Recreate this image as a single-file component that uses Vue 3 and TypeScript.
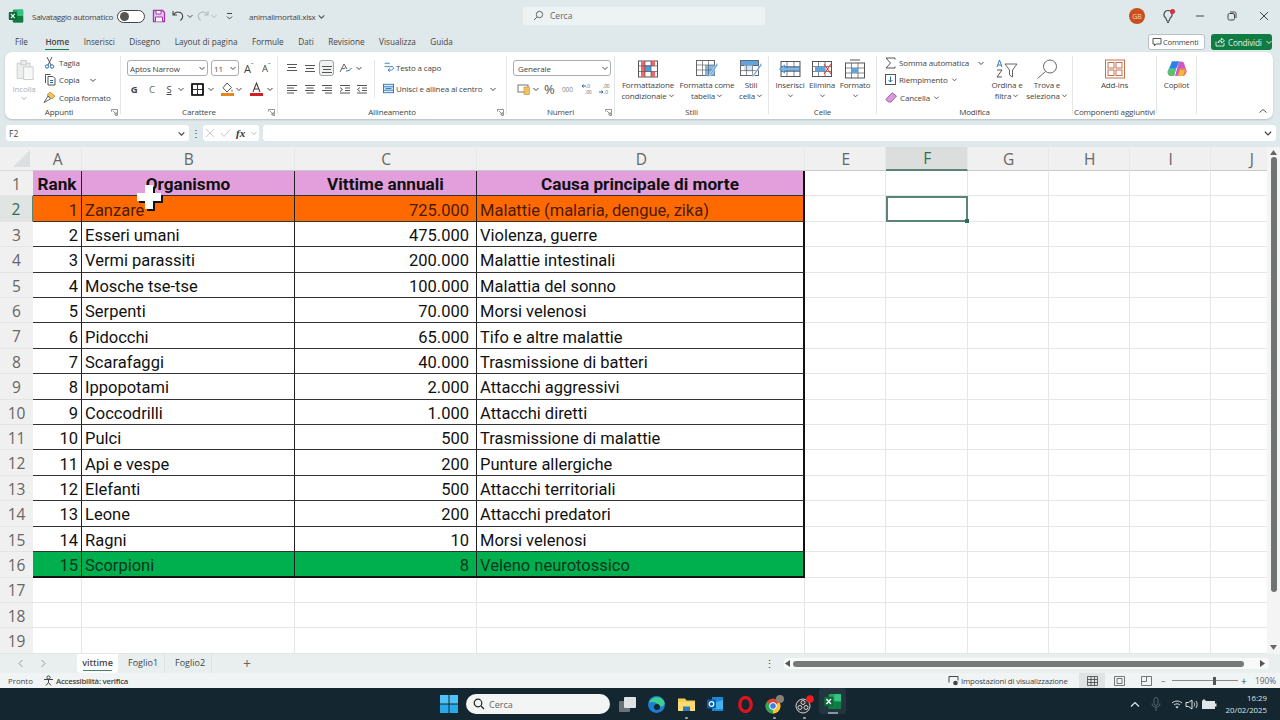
<script setup lang="ts">
type Row = [string, string, string, string];

const columns = ["A", "B", "C", "D", "E", "F", "G", "H", "I", "J"];
const tabs = ["File", "Home", "Inserisci", "Disegno", "Layout di pagina", "Formule", "Dati", "Revisione", "Visualizza", "Guida"];

const table: Row[] = [
  ["Rank", "Organismo", "Vittime annuali", "Causa principale di morte"],
  ["1", "Zanzare", "725.000", "Malattie (malaria, dengue, zika)"],
  ["2", "Esseri umani", "475.000", "Violenza, guerre"],
  ["3", "Vermi parassiti", "200.000", "Malattie intestinali"],
  ["4", "Mosche tse-tse", "100.000", "Malattia del sonno"],
  ["5", "Serpenti", "70.000", "Morsi velenosi"],
  ["6", "Pidocchi", "65.000", "Tifo e altre malattie"],
  ["7", "Scarafaggi", "40.000", "Trasmissione di batteri"],
  ["8", "Ippopotami", "2.000", "Attacchi aggressivi"],
  ["9", "Coccodrilli", "1.000", "Attacchi diretti"],
  ["10", "Pulci", "500", "Trasmissione di malattie"],
  ["11", "Api e vespe", "200", "Punture allergiche"],
  ["12", "Elefanti", "500", "Attacchi territoriali"],
  ["13", "Leone", "200", "Attacchi predatori"],
  ["14", "Ragni", "10", "Morsi velenosi"],
  ["15", "Scorpioni", "8", "Veleno neurotossico"],
];

const rowNumbers = Array.from({ length: 19 }, (_, i) => i + 1);

const cellText = (row: number, col: number) => table[row - 1]?.[col] ?? "";

const cellClass = (row: number, col: number) => {
  const inTable = col < 4 && row <= 16;
  return {
    cell: true,
    boxed: inTable,
    first: inTable && col === 0,
    last: inTable && col === 3,
    head: inTable && row === 1,
    orange: inTable && row === 2,
    green: inTable && row === 16,
    bottom: inTable && row === 16,
    num: inTable && row > 1 && (col === 0 || col === 2),
    selected: row === 2 && col === 5,
  };
};
</script>

<template>
  <div class="app">
    <svg class="defs" aria-hidden="true">
      <symbol id="chev" viewBox="0 0 8 8"><path d="M1.5 3 4 5.5 6.5 3" fill="none" stroke="currentColor" stroke-width="1" /></symbol>
      <symbol id="excel" viewBox="0 0 20 20">
        <rect x="6" y="2" width="13" height="16" rx="1.5" fill="#21a366" />
        <rect x="12" y="2" width="7" height="8" rx="1" fill="#33c481" />
        <rect x="6" y="10" width="13" height="8" rx="1" fill="#107c41" />
        <rect x="1" y="5" width="10" height="10" rx="1.2" fill="#0b6a37" />
        <path d="m3.6 7.3 4.8 5.4m0-5.4-4.8 5.4" stroke="#fff" stroke-width="1.4" />
      </symbol>
      <symbol id="launch" viewBox="0 0 8 8"><path d="M.5 3V.5H7.5V7.5H5M2 2 6 6M6 3.5V6H3.5" fill="none" stroke="#666" stroke-width=".8" /></symbol>
    </svg>

    <header class="titlebar">
      <svg class="t-excel" width="16" height="16"><use href="#excel" /></svg>
      <span class="t-auto">Salvataggio automatico</span>
      <span class="toggle"><i /></span>
      <svg class="t-save" width="14" height="14" viewBox="0 0 14 14">
        <path d="M1.5 1.5h9l2 2v9h-11z" fill="#e9c8ee" stroke="#a336ad" stroke-width="1.3" />
        <path d="M4 1.5h5v3.5H4zM3.5 12.5V8h7v4.5" fill="#fff" stroke="#a336ad" stroke-width="1" />
      </svg>
      <svg class="t-undo" width="14" height="14" viewBox="0 0 14 14"><path d="M2 2v4h4M2.3 6C4 3.3 7 2.5 9.3 3.6c3.300 1.600 3.200 5.800 0 8" fill="none" stroke="#444" stroke-width="1.1" /></svg>
      <svg class="mini g1" width="8" height="8"><use href="#chev" /></svg>
      <svg class="t-redo" width="14" height="14" viewBox="0 0 14 14"><path d="M12 2v4H8M11.700 6C10 3.300 7 2.500 4.700 3.600c-3.300 1.600-3.200 5.800 0 8" fill="none" stroke="#b4bbbd" stroke-width="1.1" /></svg>
      <svg class="mini g2 dim" width="8" height="8"><use href="#chev" /></svg>
      <svg class="t-qat" width="9" height="9" viewBox="0 0 9 9"><path d="M2 1.500h5M2 4.500l2.500 2.500L7 4.500" fill="none" stroke="#444" /></svg>
      <span class="t-file">animalimortali.xlsx</span>
      <svg class="mini g3" width="9" height="9"><use href="#chev" /></svg>
      <div class="t-search">
        <svg width="11" height="11" viewBox="0 0 11 11"><circle cx="6.500" cy="4.500" r="3.200" fill="none" stroke="#666" /><path d="M4.200 6.800 1 10" stroke="#666" /></svg>
        <span>Cerca</span>
      </div>
      <span class="avatar">GB</span>
      <span class="bulb">
        <svg width="14" height="16" viewBox="0 0 14 16"><path d="M7 2.500a4 4 0 0 1 2.300 7.300L8 13H6L4.700 9.800A4 4 0 0 1 7 2.500z" fill="none" stroke="#444" stroke-width="1.100" /><path d="M6 14.500h2" stroke="#444" /></svg>
        <i />
      </span>
      <svg class="w-min" width="10" height="10" viewBox="0 0 10 10"><path d="M1 5h8" stroke="#444" /></svg>
      <svg class="w-max" width="10" height="10" viewBox="0 0 10 10"><rect x="1" y="2.500" width="6.500" height="6.500" rx="1.500" fill="none" stroke="#444" /><path d="M3 1h4.500A1.500 1.500 0 0 1 9 2.500V7" fill="none" stroke="#444" /></svg>
      <svg class="w-close" width="10" height="10" viewBox="0 0 10 10"><path d="m1 1 8 8m0-8-8 8" stroke="#444" /></svg>
    </header>

    <nav class="tabsbar">
      <span v-for="tab in tabs" :key="tab" class="tab" :class="{ active: tab === 'Home' }">{{ tab }}</span>
      <div class="tab-actions">
        <button class="comments">
          <svg width="10" height="10" viewBox="0 0 10 10"><path d="M1 1.500h8v5.500H4L2.500 8.800V7H1z" fill="none" stroke="#444" stroke-width=".9" /></svg>
          Commenti
        </button>
        <button class="share">
          <svg width="10" height="10" viewBox="0 0 10 10"><path d="M1 4.500V9h8V6M3 6c.3-2 1.600-3 3.500-3V1.200L9.500 3.800 6.500 6V4.500C5 4.500 4 5 3 6z" fill="none" stroke="#fff" stroke-width=".8" /></svg>
          Condividi
          <svg width="8" height="8"><use href="#chev" /></svg>
        </button>
      </div>
    </nav>

    <section class="ribbon">
      <div class="group g-appunti">
        <div class="body">
          <div class="paste">
            <svg width="19" height="21" viewBox="0 0 22 24"><path d="M2.500 4.500h15v18h-15z" fill="#eceeee" stroke="#c5c9c9" /><rect x="7" y="1.500" width="6" height="5" fill="#eceeee" stroke="#c5c9c9" /><rect x="10" y="9" width="11" height="14.500" fill="#f7f8f8" stroke="#c5c9c9" /></svg>
            <span>Incolla</span>
            <svg width="8" height="8"><use href="#chev" /></svg>
          </div>
          <div class="stack">
            <div class="small">
              <svg width="13" height="13" viewBox="0 0 13 13"><path d="M4 1l4 8M9 1 5 9" stroke="#555" fill="none" /><circle cx="4" cy="10.500" r="1.700" fill="none" stroke="#1f6db5" /><circle cx="9" cy="10.500" r="1.700" fill="none" stroke="#1f6db5" /></svg>
              Taglia
            </div>
            <div class="small">
              <svg width="13" height="13" viewBox="0 0 13 13"><path d="M2.500 10V1.500h5" fill="none" stroke="#555" /><path d="M5 3.500h5l2 2v6.500H5z" fill="#fff" stroke="#555" /><path d="M7 7.500h3M7 9.500h3" stroke="#1f6db5" /></svg>
              Copia
              <svg class="push-copy" width="8" height="8"><use href="#chev" /></svg>
            </div>
            <div class="small">
              <svg width="13" height="13" viewBox="0 0 13 13"><path d="m7 1 5 4-3 3-5-4z" fill="#f3c35b" stroke="#b0822a" stroke-width=".7" /><path d="M5 5 1 11.500 7.500 8z" fill="#fff" stroke="#555" stroke-width=".9" /></svg>
              Copia formato
            </div>
          </div>
        </div>
        <div class="lbl lbl-appunti">Appunti</div>
        <svg class="launcher" width="7" height="7"><use href="#launch" /></svg>
      </div>

      <div class="group g-font">
        <div class="body col">
          <div class="line">
            <div class="select s-font">Aptos Narrow<svg width="8" height="8"><use href="#chev" /></svg></div>
            <div class="select s-size">11<svg width="8" height="8"><use href="#chev" /></svg></div>
            <span class="grow-a">A<sup>ˆ</sup></span>
            <span class="shrink-a">A<sup>ˇ</sup></span>
          </div>
          <div class="line l2 font-tools">
            <b class="fi i-g">G</b>
            <span class="fi i-c">C</span>
            <span class="fi i-s">S</span>
            <svg class="i-c1" width="8" height="8"><use href="#chev" /></svg>
            <svg class="i-b" width="13" height="13" viewBox="0 0 13 13"><path d="M1 1h11v11H1zM6.500 1v11M1 6.500h11" fill="none" stroke="#333" stroke-width="1" /><path d="M1 1h11v11H1z" fill="none" stroke="#111" stroke-width="1.700" /></svg>
            <svg class="i-c2" width="8" height="8"><use href="#chev" /></svg>
            <svg class="i-fill" width="13" height="14" viewBox="0 0 13 14"><path d="m6 1 4.500 4.500L6 10 2 5.800z" fill="#fff" stroke="#555" /><path d="M11 7.500c.8 1 .8 2.300 0 2.300s-.8-1.300 0-2.300z" fill="#555" /><rect y="11" width="13" height="3" fill="#e8851f" /></svg>
            <svg class="i-c3" width="8" height="8"><use href="#chev" /></svg>
            <svg class="i-color" width="13" height="14" viewBox="0 0 13 14"><path d="m3 10 3.500-9 3.500 9M4.300 7h4.400" fill="none" stroke="#444" stroke-width="1.100" /><rect y="11" width="13" height="3" fill="#d21f26" /></svg>
            <svg class="i-c4" width="8" height="8"><use href="#chev" /></svg>
          </div>
        </div>
        <div class="lbl">Carattere</div>
        <svg class="launcher" width="7" height="7"><use href="#launch" /></svg>
      </div>

      <div class="group g-align">
        <div class="body">
          <div class="align-icons">
            <svg width="12" height="9" viewBox="0 0 12 9"><path d="M1 .5h10M2 3.500h8M1 6.500h10" stroke="#555" /></svg>
            <svg width="12" height="9" viewBox="0 0 12 9"><path d="M1 1.500h10M2 4.500h8M1 7.500h10" stroke="#555" /></svg>
            <span class="align-on"><svg width="12" height="9" viewBox="0 0 12 9"><path d="M1 2.500h10M2 5.500h8M1 8.500h10" stroke="#555" /></svg></span>
            <span class="orient"><svg width="14" height="11" viewBox="0 0 14 11"><path d="m1 9 4-8 3 5M2.500 6l4-1" fill="none" stroke="#666" /><path d="M7 8c2.500 0 4-1 5.500-3" fill="none" stroke="#1f6db5" /></svg><svg width="8" height="8"><use href="#chev" /></svg></span>
            <svg width="12" height="9" viewBox="0 0 12 9"><path d="M1 .5h10M1 3h7M1 5.500h10M1 8h7" stroke="#555" /></svg>
            <svg width="12" height="9" viewBox="0 0 12 9"><path d="M1 .5h10M2.500 3h7M1 5.500h10M2.500 8h7" stroke="#555" /></svg>
            <svg width="12" height="9" viewBox="0 0 12 9"><path d="M1 .5h10M4 3h7M1 5.500h10M4 8h7" stroke="#555" /></svg>
            <svg width="12" height="9" viewBox="0 0 12 9"><path d="M1 .5h10M6 3h5M6 5.500h5M1 8h10M1 2.500l2.500 2-2.500 2" fill="none" stroke="#555" /></svg>
            <svg width="12" height="9" viewBox="0 0 12 9"><path d="M1 .5h10M6 3h5M6 5.500h5M1 8h10M4 2.500l-2.500 2 2.500 2" fill="none" stroke="#555" /></svg>
          </div>
          <div class="stack wrap-stack">
            <div class="small">
              <svg width="11" height="11" viewBox="0 0 13 13"><path d="M2 1.500h6M2 5.500h9c1.800 0 1.800 4-1 4H6m2-2-2 2 2 2" fill="none" stroke="#1f6db5" /></svg>
              Testo a capo
            </div>
            <div class="small merge">
              <svg width="11" height="11" viewBox="0 0 13 13"><rect x=".5" y="1.500" width="12" height="10" fill="#d9ecfa" stroke="#1f6db5" /><path d="M.5 4.500h12M.5 8.500h12M3 6.500h7" stroke="#1f6db5" /></svg>
              Unisci e allinea al centro
              <svg class="push-merge" width="8" height="8"><use href="#chev" /></svg>
            </div>
          </div>
        </div>
        <div class="lbl">Allineamento</div>
        <svg class="launcher" width="7" height="7"><use href="#launch" /></svg>
      </div>

      <div class="group g-num">
        <div class="body col">
          <div class="line"><div class="select s-num">Generale<svg width="8" height="8"><use href="#chev" /></svg></div></div>
          <div class="line l2 num-tools">
            <svg width="13" height="12" viewBox="0 0 13 12"><rect x="1" y="2" width="10" height="7" fill="none" stroke="#777" /><rect x="7" y="4" width="5.500" height="7.500" fill="#f2c063" stroke="#b0822a" stroke-width=".5" /></svg>
            <svg class="nc" width="8" height="8"><use href="#chev" /></svg>
            <span class="pct">%</span>
            <span class="thou">000</span>
            <svg class="inc" width="14" height="12" viewBox="0 0 14 12"><path d="M5 3H1m1.500-1.500L1 3l1.500 1.500" fill="none" stroke="#1f6db5" /><text x="5" y="5" font-size="5" fill="#666">,0</text><text x="4" y="11" font-size="5" fill="#666">,00</text></svg>
            <svg class="dec" width="14" height="12" viewBox="0 0 14 12"><path d="M1 9h4m-1.500-1.500L5 9l-1.500 1.500" fill="none" stroke="#1f6db5" /><text x="5" y="5" font-size="5" fill="#666">,00</text><text x="6" y="11" font-size="5" fill="#666">,0</text></svg>
          </div>
        </div>
        <div class="lbl">Numeri</div>
        <svg class="launcher" width="7" height="7"><use href="#launch" /></svg>
      </div>

      <div class="group g-stili">
        <div class="body bigs">
          <div class="big b-cond">
            <svg width="20" height="17" viewBox="0 0 20 17"><rect x=".5" y=".5" width="19" height="16" fill="#fff" stroke="#555" /><path d="M3 .5h4v16H3zM7 5h6v6H7z" fill="#f0656c" /><path d="M13 .5h4v5h-4zM13 11h4v5.500h-4z" fill="#f0656c" /><path d="M7 5h6v6H7z" fill="#4a9fe0" /><path d="M.5 5.500h19M.5 11h19M7 .5v16M13 .5v16" stroke="#555" stroke-width=".7" /></svg>
            <span>Formattazione</span>
            <span>condizionale <svg width="7" height="7"><use href="#chev" /></svg></span>
          </div>
          <div class="big b-tab">
            <svg width="22" height="18" viewBox="0 0 22 18"><rect x=".5" y=".5" width="18" height="15" fill="#fff" stroke="#666" /><rect x="9" y="5" width="9.500" height="10.500" fill="#7db7e8" /><path d="M.5 5h18M.5 10h18M6.500.5v15M12.500.5v15" stroke="#666" stroke-width=".7" /><path d="m21 3-8 12-1.500 2.500 2.600-1.400L22 5z" fill="#5ea4de" stroke="#fff" stroke-width=".5" /></svg>
            <span>Formatta come</span>
            <span>tabella <svg width="7" height="7"><use href="#chev" /></svg></span>
          </div>
          <div class="big b-cell">
            <svg width="22" height="18" viewBox="0 0 22 18"><rect x=".5" y=".5" width="18" height="15" fill="#fff" stroke="#666" /><rect x=".5" y=".5" width="18" height="5" fill="#5ea4de" stroke="#666" /><rect x="4" y="5.500" width="9" height="6" fill="#cfe4f6" /><path d="M.5 10.500h18M6.500 5.500v10M12.500 5.500v10" stroke="#666" stroke-width=".7" /><path d="m21 3-8 12-1.500 2.500 2.600-1.400L22 5z" fill="#5ea4de" stroke="#fff" stroke-width=".5" /></svg>
            <span>Stili</span>
            <span>cella <svg width="7" height="7"><use href="#chev" /></svg></span>
          </div>
        </div>
        <div class="lbl">Stili</div>
      </div>

      <div class="group g-celle">
        <div class="body bigs">
          <div class="big b-ins">
            <svg width="22" height="16" viewBox="0 0 22 16"><rect x="2" y=".5" width="19" height="15" fill="#fff" stroke="#555" /><path d="M2 5.500h19M2 10.500h19M8 .5v15M15 .5v15" stroke="#555" stroke-width=".7" /><path d="m.5 8 5-4v2.500h15v3H5.500V12z" fill="#7db7e8" stroke="#1f6db5" stroke-width=".6" /></svg>
            <span>Inserisci</span>
            <span><svg width="7" height="7"><use href="#chev" /></svg></span>
          </div>
          <div class="big b-del">
            <svg width="20" height="16" viewBox="0 0 20 16"><rect x=".5" y=".5" width="19" height="15" fill="#fff" stroke="#555" /><path d="M.5 5.500h19M.5 10.500h19M6.500.5v15M13 .5v15" stroke="#555" stroke-width=".7" /><rect x="3" y="5.500" width="10" height="5" fill="#5ea4de" /><path d="m12 3 7 10m0-10-7 10" stroke="#d6443c" stroke-width="1.100" /></svg>
            <span>Elimina</span>
            <span><svg width="7" height="7"><use href="#chev" /></svg></span>
          </div>
          <div class="big b-fmt">
            <svg width="20" height="19" viewBox="0 0 20 19"><path d="M5 .5h10" stroke="#555" /><rect x=".5" y="3.500" width="19" height="15" fill="#fff" stroke="#555" /><path d="M.5 8.500h19M.5 13.500h19M6.500 3.500v15M13 3.500v15" stroke="#555" stroke-width=".7" /><rect x="6.500" y="8.500" width="6.500" height="5" fill="#5ea4de" /></svg>
            <span>Formato</span>
            <span><svg width="7" height="7"><use href="#chev" /></svg></span>
          </div>
        </div>
        <div class="lbl">Celle</div>
      </div>

      <div class="group g-mod">
        <div class="body">
          <div class="stack mod-stack">
            <div class="small">
              <svg width="11" height="12" viewBox="0 0 11 12"><path d="M10 2.500V1H1l4.500 5L1 11h9V9.500" fill="none" stroke="#555" /></svg>
              Somma automatica
              <svg class="push-sum" width="8" height="8"><use href="#chev" /></svg>
            </div>
            <div class="small">
              <svg width="11" height="11" viewBox="0 0 11 11"><rect x=".5" y=".5" width="10" height="10" fill="none" stroke="#555" /><path d="M5.500 2.500v5.500m-2-2 2 2 2-2" fill="none" stroke="#1f6db5" /></svg>
              Riempimento <svg width="7" height="7"><use href="#chev" /></svg>
            </div>
            <div class="small">
              <svg width="12" height="11" viewBox="0 0 12 11"><path d="M7 .8 11.500 4l-5.500 6H3.500L.8 7.500z" fill="#d99ad5" stroke="#9a3fa3" stroke-width=".8" /></svg>
              Cancella <svg width="7" height="7"><use href="#chev" /></svg>
            </div>
          </div>
          <div class="big b-sort">
            <svg width="22" height="20" viewBox="0 0 22 20"><path d="M1 8 3.500 1 6 8M1.800 6h3.400" fill="none" stroke="#1f6db5" stroke-width=".9" /><path d="M1 11h5l-5 7h5" fill="none" stroke="#444" stroke-width=".9" /><path d="M9 5h12l-4.500 6v7l-3-2v-5z" fill="none" stroke="#666" /></svg>
            <span>Ordina e</span>
            <span>filtra <svg width="7" height="7"><use href="#chev" /></svg></span>
          </div>
          <div class="big b-find">
            <svg width="22" height="20" viewBox="0 0 22 20"><circle cx="14" cy="7.500" r="6.500" fill="none" stroke="#666" /><path d="M9.500 12.500 1.500 19.500" stroke="#666" /></svg>
            <span>Trova e</span>
            <span>seleziona <svg width="7" height="7"><use href="#chev" /></svg></span>
          </div>
        </div>
        <div class="lbl">Modifica</div>
      </div>

      <div class="group g-add">
        <div class="body bigs">
          <div class="big">
            <svg width="20" height="19" viewBox="0 0 20 19"><rect x=".5" y=".5" width="19" height="18" fill="none" stroke="#c8714e" /><rect x="3" y="3" width="6" height="5.500" fill="none" stroke="#c8714e" /><rect x="11" y="3" width="6" height="5.500" fill="none" stroke="#c8714e" /><rect x="3" y="10.500" width="6" height="5.500" fill="none" stroke="#c8714e" /><rect x="11" y="10.500" width="6" height="5.500" fill="none" stroke="#c8714e" /></svg>
            <span>Add-ins</span>
          </div>
        </div>
        <div class="lbl">Componenti aggiuntivi</div>
      </div>

      <div class="group g-copilot">
        <div class="body bigs">
          <div class="big">
            <svg width="20" height="20" viewBox="0 0 20 20">
              <path d="M5 2.500h7L9 10l-2 7H4.500C1.500 17 0 14.500 1 11.500z" fill="#38a9e0" />
              <path d="M5 2.500h7L9.500 9H3z" fill="#2d7fe0" />
              <path d="M3 10h6l-2 7H4.500C1.500 17 0 14.500 1 11.500z" fill="#5fc06a" />
              <path d="M8 17h7c2.500 0 4-2 4.500-5L17 4c-.5-1.500-2-1.500-5-1.500z" fill="#c85ac8" />
              <path d="M10 17h5c2.500 0 4-2 4.500-5l-1-3H13z" fill="#f07a5a" />
              <path d="M13 11h5l-2 6h-5z" fill="#f4b63c" />
            </svg>
            <span>Copilot</span>
          </div>
        </div>
      </div>

      <svg class="collapse" width="10" height="10" viewBox="0 0 10 10"><path d="m1.500 6.500 3.500-3 3.500 3" fill="none" stroke="#555" /></svg>
    </section>

    <div class="formula">
      <div class="namebox">F2<svg width="9" height="9"><use href="#chev" /></svg></div>
      <span class="vdots">⋮</span>
      <div class="fnbox">
        <svg width="10" height="10" viewBox="0 0 10 10"><path d="m1 1 8 8m0-8-8 8" stroke="#c5c9c9" /></svg>
        <svg width="11" height="10" viewBox="0 0 11 10"><path d="m1 5 3 3.500L10 1.500" fill="none" stroke="#c5c9c9" /></svg>
        <i>fx</i>
        <svg class="dim" width="8" height="8"><use href="#chev" /></svg>
      </div>
      <div class="input"><svg width="10" height="10"><use href="#chev" /></svg></div>
    </div>

    <main class="sheet-wrap">
      <div class="sheet">
        <div class="corner"><i /></div>
        <div v-for="c in columns" :key="c" class="colhead" :class="{ on: c === 'F' }">{{ c }}</div>
        <template v-for="row in rowNumbers" :key="row">
          <div class="rowhead" :class="{ on: row === 2 }">{{ row }}</div>
          <div v-for="(c, i) in columns" :key="c" :class="cellClass(row, i)">{{ cellText(row, i) }}</div>
        </template>
      </div>
      <svg class="cursor" width="26" height="26" viewBox="0 0 26 26">
        <path d="M10 2h8v8h8v8h-8v8h-8v-8H2v-8h8z" fill="#111" />
        <path d="M8 0h8v8h8v8h-8v8H8v-8H0V8h8z" fill="#fff" />
      </svg>
      <aside class="vscroll">
        <svg width="7" height="5" viewBox="0 0 7 5"><path d="M3.500 0 7 5H0z" fill="#666" /></svg>
        <div class="vthumb" />
        <svg class="vdown" width="7" height="5" viewBox="0 0 7 5"><path d="M3.500 5 7 0H0z" fill="#666" /></svg>
      </aside>
    </main>

    <div class="sheetbar">
      <svg class="nav" width="8" height="9" viewBox="0 0 8 9"><path d="M5.500 1 2 4.500 5.500 8" fill="none" stroke="#999" /></svg>
      <svg class="nav nav2" width="8" height="9" viewBox="0 0 8 9"><path d="M2.500 1 6 4.500 2.500 8" fill="none" stroke="#999" /></svg>
      <div class="stab active">vittime</div>
      <div class="stab">Foglio1</div>
      <div class="stab sep">Foglio2</div>
      <span class="plus">+</span>
      <span class="sdots">⋮</span>
      <div class="htrack">
        <svg width="5" height="7" viewBox="0 0 5 7"><path d="M0 3.500 5 0v7z" fill="#555" /></svg>
        <div class="hthumb" />
        <svg width="5" height="7" viewBox="0 0 5 7"><path d="M5 3.500 0 0v7z" fill="#555" /></svg>
      </div>
    </div>

    <footer class="status">
      <span class="pronto">Pronto</span>
      <svg width="11" height="11" viewBox="0 0 11 11"><circle cx="5.500" cy="2.500" r="1.600" fill="none" stroke="#444" /><path d="M1 4.500h9M5.500 4.500v3M5.500 7.500 3 10.500M5.500 7.500l2.500 3" fill="none" stroke="#444" /></svg>
      <b class="acc">Accessibilità: verifica</b>
      <div class="st-right">
        <svg width="11" height="11" viewBox="0 0 11 11"><path d="M1 7.500V1.500h9v4" fill="none" stroke="#444" /><circle cx="7.500" cy="8" r="2.300" fill="#444" /></svg>
        <span class="disp">Impostazioni di visualizzazione</span>
        <span class="view on"><svg width="11" height="10" viewBox="0 0 11 10"><path d="M.5.500h10v9H.5zM.5 3.500h10M.5 6.500h10M4 .5v9M7.500.5v9" fill="none" stroke="#444" stroke-width=".8" /></svg></span>
        <span class="view"><svg width="11" height="10" viewBox="0 0 11 10"><path d="M.5.500h10v9H.5zM3 2.500h5v5H3z" fill="none" stroke="#555" stroke-width=".8" /></svg></span>
        <span class="view"><svg width="11" height="10" viewBox="0 0 11 10"><path d="M.5.500h10v9H.5zM5.500.5v5H.5" fill="none" stroke="#555" stroke-width=".8" /></svg></span>
        <span class="zoom-m">−</span>
        <div class="slider"><i /></div>
        <span class="zoom-p">+</span>
        <span class="zoom-v">190%</span>
      </div>
    </footer>

    <div class="taskbar">
      <svg class="start" width="18" height="18" viewBox="0 0 18 18">
        <rect width="8.500" height="8.500" fill="#4fc3f7" /><rect x="9.500" width="8.500" height="8.500" fill="#4fc3f7" />
        <rect y="9.500" width="8.500" height="8.500" fill="#29a8ea" /><rect x="9.500" y="9.500" width="8.500" height="8.500" fill="#29a8ea" />
      </svg>
      <div class="tb-search">
        <svg width="12" height="12" viewBox="0 0 12 12"><circle cx="5" cy="5" r="3.800" fill="none" stroke="#222" stroke-width="1.200" /><path d="m8 8 3 3" stroke="#222" stroke-width="1.200" /></svg>
        <span>Cerca</span>
      </div>
      <div class="tb-apps">
        <span class="app-slot">
          <svg width="17" height="15" viewBox="0 0 17 15"><rect y="4" width="11" height="11" rx="1" fill="#6a7478" /><rect x="5" y="0" width="12" height="11" rx="1" fill="#dfe3e5" /></svg>
        </span>
        <span class="app-slot">
          <svg width="17" height="17" viewBox="0 0 17 17"><circle cx="8.500" cy="8.500" r="8.500" fill="#1a7fd0" /><path d="M1 6.500C3 1 12-1 16 5c1.500 3 0 5.500-3 5.500-2.500 0-3-1.500-3-2.500-2-2.500-7-2.500-9-1.500z" fill="#3ccf91" /><circle cx="9" cy="11" r="3" fill="#14262f" /></svg>
        </span>
        <span class="app-slot dot">
          <svg width="17" height="15" viewBox="0 0 17 15"><path d="M0 1.500h7l1.500 2H17V14H0z" fill="#f6cf55" /><rect y="5" width="17" height="9" fill="#fbdc74" /><rect x="5" y="9.500" width="7" height="4.500" fill="#2b79c2" /></svg>
        </span>
        <span class="app-slot">
          <svg width="17" height="16" viewBox="0 0 17 16"><path d="M5 1h11v14H5z" fill="#1a8ad4" /><path d="m6 7 10-3v9H6z" fill="#40b4ee" /><rect y="3.500" width="9" height="9" rx="1" fill="#0f5fa8" /><circle cx="4.500" cy="8" r="2.300" fill="none" stroke="#fff" stroke-width="1.200" /></svg>
        </span>
        <span class="app-slot">
          <svg width="15" height="17" viewBox="0 0 15 17"><ellipse cx="7.500" cy="8.500" rx="5.700" ry="7" fill="none" stroke="#d9141e" stroke-width="3.400" /></svg>
        </span>
        <span class="app-slot dot">
          <svg width="19" height="19" viewBox="0 0 19 19">
            <circle cx="8" cy="11" r="7.500" fill="#e0452f" />
            <path d="M8 11 1.500 7.300A7.500 7.500 0 0 0 8 18.500z" fill="#33a853" />
            <path d="M8 11v7.500a7.500 7.500 0 0 0 6.500-11.200z" fill="#f7c72f" />
            <circle cx="8" cy="11" r="3.400" fill="#3a7fe8" stroke="#fff" />
            <circle cx="15" cy="4" r="4" fill="#8a8076" />
          </svg>
        </span>
        <span class="app-slot dot">
          <svg width="19" height="19" viewBox="0 0 19 19">
            <circle cx="8" cy="11" r="7" fill="#2a2f33" stroke="#cfd3d5" />
            <circle cx="8" cy="7.500" r="2" fill="none" stroke="#cfd3d5" /><circle cx="5" cy="12.500" r="2" fill="none" stroke="#cfd3d5" /><circle cx="11" cy="12.500" r="2" fill="none" stroke="#cfd3d5" />
            <circle cx="15" cy="4" r="3.800" fill="#f01c1c" />
          </svg>
        </span>
        <span class="app-slot current">
          <svg width="19" height="19"><use href="#excel" /></svg>
        </span>
      </div>
      <div class="tray">
        <svg width="10" height="7" viewBox="0 0 10 7"><path d="m1 5.500 4-4 4 4" fill="none" stroke="#e4e8ea" stroke-width="1.200" /></svg>
        <svg class="mic" width="10" height="14" viewBox="0 0 10 14"><rect x="3" y=".5" width="4" height="8" rx="2" fill="none" stroke="#5a666c" /><path d="M1 6.500c0 5 8 5 8 0M5 11v3" fill="none" stroke="#5a666c" /></svg>
        <svg class="wifi" width="12" height="10" viewBox="0 0 12 10"><path d="M1 4c3-2.600 7-2.600 10 0M3 6c2-1.600 4-1.600 6 0" fill="none" stroke="#dfe4e6" /><path d="m6 9.500-1.600-1.800c1-.7 2.200-.7 3.200 0z" fill="#dfe4e6" /></svg>
        <svg class="spk" width="14" height="11" viewBox="0 0 14 11"><path d="M1 3.500h2.500L7 1v9L3.500 7.500H1z" fill="none" stroke="#dfe4e6" /><path d="M9 3.500c.8 1.300.8 2.700 0 4M11 2c1.500 2 1.500 5 0 7" fill="none" stroke="#dfe4e6" /></svg>
        <svg class="bat" width="15" height="11" viewBox="0 0 15 11"><rect x=".5" y="2.500" width="12" height="7" fill="#dfe4e6" stroke="#dfe4e6" /><rect x="13" y="4.500" width="1.500" height="3" fill="#dfe4e6" /><path d="M2 0v3M.5 1.500h3" stroke="#dfe4e6" /></svg>
        <div class="clock"><span>16:29</span><span>20/02/2025</span></div>
      </div>
    </div>
  </div>
</template>

<style>
html,
body {
  margin: 0;
  background: #dfe8eb;
}
</style>

<style scoped>
.app {
  width: 1280px;
  height: 720px;
  overflow: hidden;
  display: flex;
  flex-direction: column;
  background: #dfe8eb;
  color: #444;
  font-family: "Open Sans", "Noto Sans", sans-serif;
  font-size: 8px;
}

.defs {
  position: absolute;
  width: 0;
  height: 0;
}

svg {
  flex: none;
  display: block;
}

/* title bar */
.titlebar {
  height: 32px;
  display: flex;
  align-items: center;
  flex: none;
}

.t-excel { margin-left: 8px; }
.t-auto { margin-left: 8px; width: 80px; white-space: nowrap; letter-spacing: -0.25px; }
.toggle {
  width: 28px;
  height: 13px;
  margin-left: 5px;
  box-sizing: border-box;
  border: 1px solid #444;
  border-radius: 7px;
  background: #fff;
  display: flex;
  align-items: center;
  padding-left: 2px;
}
.toggle i { width: 9px; height: 9px; border-radius: 50%; background: #555; }
.t-save { margin-left: 7px; }
.t-undo { margin-left: 5px; }
.mini { color: #555; }
.g1 { margin-left: 1px; }
.t-redo { margin-left: 2px; }
.dim { color: #b4bbbd; }
.g2 { margin-left: 0; }
.t-qat { margin-left: 7px; }
.t-file { margin-left: 15px; width: 67px; white-space: nowrap; letter-spacing: -0.2px; }
.g3 { margin-left: 1px; }
.t-search {
  margin-left: 196px;
  width: 244px;
  height: 20px;
  box-sizing: border-box;
  border-radius: 3px;
  background: #edf2f3;
  border: 1px solid #e3eaec;
  display: flex;
  align-items: center;
  gap: 6px;
  padding-left: 10px;
  margin-top: -1px;
  color: #666;
  font-size: 8.500px;
}
.avatar {
  margin-left: 363px;
  width: 16px;
  height: 16px;
  border-radius: 50%;
  background: #c8501a;
  color: #f0d8cc;
  font-size: 7px;
  display: flex;
  align-items: center;
  justify-content: center;
}
.bulb { margin-left: 16px; position: relative; }
.bulb i { position: absolute; top: 1px; right: 0; width: 5px; height: 5px; border-radius: 50%; background: #d5303c; }
.w-min { margin-left: 20px; }
.w-max { margin-left: 22px; }
.w-close { margin-left: 22px; }

/* tabs */
.tabsbar {
  height: 20px;
  flex: none;
  display: flex;
  align-items: center;
  gap: 14.500px;
  padding-left: 15px;
  font-size: 8.200px;
}
.tab { position: relative; white-space: nowrap; line-height: 20px; }
.tab:first-child { margin-right: 3px; }
.tab.active { font-weight: 600; }
.tab.active::after {
  content: "";
  position: absolute;
  left: 0;
  right: 0;
  bottom: 2px;
  height: 1.500px;
  background: #1f7a4d;
}
.tab-actions { margin-left: auto; display: flex; gap: 6px; padding-right: 8px; }
button {
  font: inherit;
  display: flex;
  align-items: center;
  box-sizing: border-box;
  height: 16px;
  border-radius: 3px;
  white-space: nowrap;
  letter-spacing: -0.2px;
}
.comments {
  width: 57px;
  padding: 0 3px;
  gap: 1px;
  background: #fff;
  border: 1px solid #b9c0c2;
  color: #444;
  font-size: 7.600px;
}
.share {
  width: 61px;
  padding: 0 2px 0 4px;
  gap: 3px;
  background: #107c41;
  border: 0;
  color: #e3f0e9;
}

/* ribbon */
.ribbon {
  height: 67px;
  flex: none;
  box-sizing: border-box;
  margin: 0 7px 0 5px;
  padding-top: 4px;
  display: flex;
  background: #fff;
  border-radius: 7px;
  box-shadow: 0 1px 2px rgba(0, 0, 0, 0.18);
  position: relative;
  letter-spacing: -0.15px;
}
.group {
  height: 58px;
  box-sizing: border-box;
  border-right: 1px solid #e4e7e7;
  display: flex;
  flex-direction: column;
  position: relative;
  flex: none;
}
.body { flex: 1; display: flex; min-height: 0; }
.body.col { flex-direction: column; padding-top: 4px; }
.lbl {
  height: 12px;
  line-height: 12px;
  margin-bottom: -4px;
  text-align: center;
  white-space: nowrap;
  font-size: 8px;
}
.launcher { position: absolute; right: 2px; bottom: -2px; }
.g-appunti { width: 116px; }
.lbl-appunti { width: 108px; }
.g-font { width: 157px; }
.g-align { width: 229px; }
.g-num { width: 108px; }
.g-stili { width: 154px; }
.g-celle { width: 108px; }
.g-mod { width: 196px; }
.g-add { width: 84px; }
.g-copilot { width: 40px; }

.paste {
  width: 38px;
  display: flex;
  flex-direction: column;
  align-items: center;
  color: #aeb3b3;
  padding-top: 3px;
  flex: none;
}
.paste span { margin-top: 3px; line-height: 11px; }
.stack { display: flex; flex-direction: column; margin-top: -2px; }
.small {
  height: 17.500px;
  display: flex;
  align-items: center;
  gap: 3px;
  white-space: nowrap;
}
.push-copy { margin-left: 7px; }

.line { display: flex; align-items: center; height: 16px; padding-left: 6px; }
.l2 { margin-top: 5px; }
.select {
  height: 16px;
  box-sizing: border-box;
  border: 1px solid #a8adad;
  border-radius: 3px;
  display: flex;
  align-items: center;
  justify-content: space-between;
  padding: 0 1px 0 2px;
  white-space: nowrap;
}
.s-font { width: 81px; }
.s-size { width: 28px; margin-left: 3px; }
.grow-a { margin-left: 5px; font-size: 11px; width: 18px; }
.shrink-a { font-size: 9.500px; }
sup { font-size: 7px; line-height: 0; }
.font-tools .fi { font-size: 9.500px; width: 8px; text-align: center; }
.i-g { margin-left: 3px; }
.i-c { margin-left: 10px; color: #666; }
.i-s { margin-left: 9px; text-decoration: underline; }
.i-c1 { margin-left: 4px; }
.i-b { margin-left: 6px; }
.i-c2 { margin-left: 3px; }
.i-fill { margin-left: 6px; }
.i-c3 { margin-left: 1px; }
.i-color { margin-left: 7px; }
.i-c4 { margin-left: 3px; }

.align-icons {
  width: 90px;
  flex: none;
  margin-left: 7px;
  display: grid;
  grid-template-columns: repeat(5, 17.500px);
  grid-template-rows: 16px 16px;
  row-gap: 5px;
  align-items: center;
  border-right: 1px solid #e4e7e7;
  height: 38px;
  box-sizing: border-box;
  margin-top: 4px;
  align-content: start;
}
.align-icons > svg { margin-left: 1px; }
.align-on {
  width: 15px;
  height: 16px;
  box-sizing: border-box;
  border: 1px solid #9ea3a3;
  border-radius: 3px;
  background: #f0f1f1;
  display: flex;
  align-items: center;
  justify-content: center;
  margin-left: -1px;
}
.orient { display: flex; align-items: center; margin-left: 1px; grid-column: span 2; gap: 2px; }
.wrap-stack { margin-left: 8px; margin-top: 1px; }
.wrap-stack .small { height: 21px; gap: 2px; }
.push-merge { margin-left: 5px; }

.s-num { width: 98px; padding-left: 4px; }
.num-tools svg:first-child { margin-left: 4px; }
.nc { margin-left: 2px; }
.pct { margin-left: 4px; font-size: 13px; width: 14px; color: #555; }
.thou { margin-left: 4px; font-size: 6.500px; width: 13px; color: #888; }
.inc { margin-left: 6px; }
.dec { margin-left: 3px; }

.bigs { justify-content: flex-start; }
.big {
  display: flex;
  flex-direction: column;
  align-items: center;
  white-space: nowrap;
  line-height: 11px;
  text-align: center;
}
.big > svg { height: 20px; padding-top: 3px; box-sizing: content-box; }
.big > span { display: flex; align-items: center; justify-content: center; gap: 1px; height: 11px; }
.b-cond { width: 62px; margin-left: 2px; }
.b-tab { width: 56px; }
.b-cell { width: 32px; margin-left: 0; }
.b-ins { width: 32px; margin-left: 5px; }
.b-del { width: 32px; }
.b-fmt { width: 34px; }
.mod-stack { margin-left: 8px; width: 102px; }
.mod-stack .small { gap: 3px; }
.push-sum { margin-left: 5px; }
.b-sort { width: 40px; margin-left: 0; }
.b-find { width: 40px; }
.g-add .big, .g-copilot .big { width: 100%; }
.collapse { position: absolute; right: 5px; bottom: 3px; }

/* formula bar */
.formula {
  height: 16px;
  flex: none;
  margin-top: 6px;
  display: flex;
  padding: 0 4px 0 6px;
  align-items: stretch;
}
.formula > div {
  background: #fff;
  border-radius: 3px;
  display: flex;
  align-items: center;
}
.namebox { width: 183px; justify-content: space-between; box-sizing: border-box; padding: 0 3px; font-size: 8.500px; }
.vdots { width: 14px; text-align: center; line-height: 16px; font-size: 10px; }
.fnbox { width: 56px; box-sizing: border-box; padding-left: 2px; gap: 5px; }
.fnbox i { font-family: "Liberation Serif", serif; font-size: 11px; font-weight: 700; color: #333; }
.input { flex: 1; margin-left: 4px; justify-content: flex-end; padding-right: 3px; }

/* sheet */
.sheet-wrap {
  height: 507px;
  flex: none;
  margin-top: 6px;
  display: flex;
  position: relative;
  background: #fff;
  overflow: hidden;
}
.sheet {
  width: 1267px;
  flex: none;
  overflow: hidden;
  display: grid;
  grid-template-columns: 33px 49px 213px 182px 328px 81px 82px 81px 81px 81px 81px;
  grid-template-rows: 24px repeat(19, 25.420px);
  font-family: Roboto, "Open Sans", sans-serif;
  font-size: 16.500px;
  color: #111;
}
.corner { background: #f0f0f0; border-bottom: 1px solid #dadada; display: flex; align-items: flex-end; justify-content: flex-end; padding: 0 3px 3px 0; box-sizing: border-box; }
.corner i { width: 17px; height: 17px; background: #dcdfdf; clip-path: polygon(100% 0, 100% 100%, 0 100%); }
.colhead, .rowhead {
  background: #f0f0f0;
  color: #666;
  display: flex;
  align-items: center;
  justify-content: center;
  font-family: "Open Sans", sans-serif;
  font-size: 15.500px;
  box-sizing: border-box;
}
.colhead { border-bottom: 1px solid #c9c9c9; border-right: 1px solid #e8e8e8; padding-left: 1.500px; }
.colhead.on { background: #dcdedd; color: #2b6e55; border-bottom: 2px solid #5c8474; }
.rowhead { border-bottom: 1px solid #e4e4e4; padding-top: 1.500px; }
.rowhead.on { background: #e0e4e2; color: #2b6e55; border-right: 1px solid #5c8474; }
.cell {
  box-sizing: border-box;
  border-right: 1px solid #e6e6e6;
  border-bottom: 1px solid #e6e6e6;
  display: flex;
  align-items: center;
  padding: 3px 3px 0;
  white-space: nowrap;
  overflow: hidden;
  min-width: 0;
}
.boxed { border-right-color: #222; border-bottom-color: #333; }
.last { border-right: 2px solid #111; }
.head { background: #e29fdb; justify-content: center; font-weight: 700; font-size: 17.200px; padding-top: 1.500px; }
.orange { background: #ff6a00; color: #4a1a00; }
.green { background: #00b04f; color: #07351c; }
.bottom { border-bottom: 2px solid #111; }
.num { justify-content: flex-end; padding-right: 7px; }
.first.num { padding-right: 3px; }
.selected { border: 2px solid #5c8474; overflow: visible; position: relative; }
.selected::after {
  content: "";
  position: absolute;
  right: -3px;
  bottom: -3px;
  width: 4px;
  height: 4px;
  background: #2e6f55;
}
.cursor { position: absolute; left: 137px; top: 38px; }
.vscroll {
  flex: 1;
  background: #f4f4f4;
  display: flex;
  flex-direction: column;
  align-items: center;
  padding-top: 3px;
}
.vthumb { width: 6px; height: 435px; margin-top: 2px; border-radius: 3px; background: #6f7472; }
.vdown { margin-top: auto; margin-bottom: 4px; }

/* sheet tabs */
.sheetbar {
  height: 19px;
  flex: none;
  background: #e9eeee;
  display: flex;
  align-items: center;
  font-size: 9px;
}
.nav { margin-left: 17px; }
.nav2 { margin-left: 14px; }
.stab { height: 19px; line-height: 17px; white-space: nowrap; box-sizing: border-box; }
.stab.active {
  margin-left: 30px;
  width: 41px;
  background: #fff;
  border-radius: 0 0 4px 4px;
  text-align: center;
  font-weight: 600;
  position: relative;
}
.stab.active::after {
  content: "";
  position: absolute;
  left: 6px;
  right: 6px;
  bottom: 2px;
  height: 1.500px;
  background: #3f8a6b;
}
.stab:not(.active) { margin-left: 10px; width: 37px; border-right: 1px solid #dde2e2; padding-right: 5px; }
.plus { margin-left: 31px; font-size: 14px; color: #666; }
.sdots { margin-left: 513px; font-size: 11px; }
.htrack {
  margin-left: 9px;
  width: 485px;
  height: 11px;
  box-sizing: border-box;
  background: #f8f9f9;
  border-radius: 3px;
  display: flex;
  align-items: center;
  padding: 0 4px 0 1px;
}
.hthumb { width: 452px; height: 6px; border-radius: 3px; background: #757a78; margin: 0 16px 0 3px; }

/* status bar */
.status {
  height: 15px;
  flex: none;
  background: #f1f4f4;
  display: flex;
  align-items: center;
  font-size: 7.800px;
}
.pronto { margin-left: 8px; width: 35px; }
.acc { margin-left: 2px; font-weight: 600; letter-spacing: -0.25px; }
.st-right { margin-left: auto; display: flex; align-items: center; }
.disp { margin-left: 2px; width: 118px; white-space: nowrap; font-weight: 500; letter-spacing: -0.15px; }
.view { width: 26px; height: 15px; display: flex; align-items: center; justify-content: center; margin-right: 1px; }
.view.on { background: #dfe3e3; }
.zoom-m { margin-left: 1px; width: 8px; }
.slider { width: 66px; height: 1px; background: #888; position: relative; margin: 0 3px; }
.slider i { position: absolute; left: 41px; top: -3.500px; width: 3px; height: 8px; background: #555; }
.zoom-p { width: 10px; font-size: 10px; }
.zoom-v { margin: 0 5px 0 4px; width: 20px; color: #666; font-size: 8.400px; }

/* taskbar */
.taskbar {
  flex: 1;
  background: #14262f;
  display: flex;
  align-items: center;
  padding-left: 440px;
}
.tb-search {
  margin-left: 8px;
  width: 144px;
  height: 20px;
  border-radius: 10px;
  background: #f3f4f4;
  display: flex;
  align-items: center;
  box-sizing: border-box;
  padding-left: 7px;
  gap: 4px;
  color: #666;
  font-size: 9px;
}
.tb-apps { display: flex; margin-left: 2.500px; }
.app-slot {
  width: 29.500px;
  height: 32px;
  display: flex;
  align-items: center;
  justify-content: center;
  position: relative;
}
.app-slot.dot::after {
  content: "";
  position: absolute;
  bottom: 1px;
  width: 3px;
  height: 2px;
  border-radius: 1px;
  background: #9aa4a8;
}
.app-slot.current { background: #233640; border-radius: 3px; height: 26px; width: 27px; }
.app-slot.current::after {
  content: "";
  position: absolute;
  bottom: 0;
  width: 10px;
  height: 2px;
  background: #8a969b;
}
.tray { margin-left: auto; display: flex; align-items: center; padding-right: 13px; }
.mic { margin-left: 11px; }
.wifi { margin-left: 10px; }
.spk { margin-left: 2px; }
.bat { margin-left: 3px; }
.clock {
  margin-left: 9px;
  display: flex;
  flex-direction: column;
  align-items: flex-end;
  color: #dfe4e6;
  font-size: 7.800px;
  line-height: 12px;
}
</style>
